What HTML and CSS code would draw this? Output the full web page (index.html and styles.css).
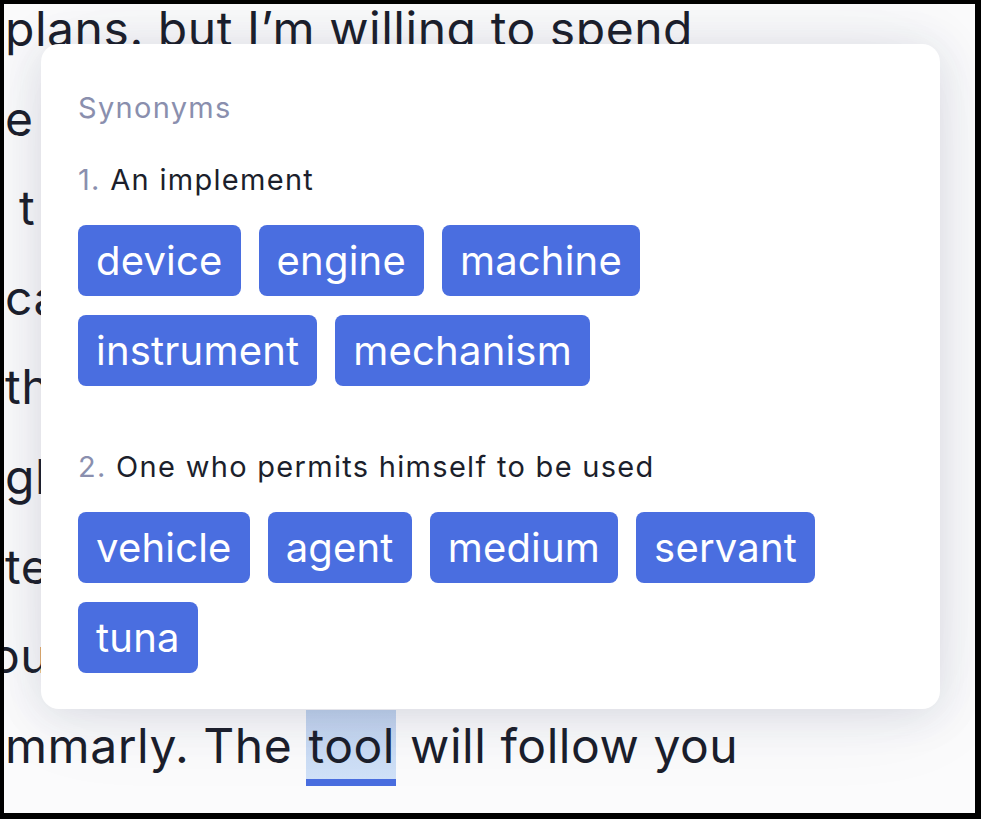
FILE: index.html
```html
<!DOCTYPE html>
<html lang="en">
<head>
<meta charset="utf-8">
<title>Synonyms</title>
<link rel="stylesheet" href="styles.css">
</head>
<body>
<div class="frame">
  <div class="doc">
    <div class="line">plans. but I’m willing to spend</div>
    <div class="line">e more time on a trip with friends</div>
    <div class="line">&nbsp;t a little more for a happy trip</div>
    <div class="line">can write with confidence every day</div>
    <div class="line">the right words in every message</div>
    <div class="line">glad to have a writing assistant</div>
    <div class="line">text that reads clearly and well</div>
    <div class="line shift">ou can trust, thanks to</div>
    <div class="line">mmarly. The <span class="hl">tool</span> will follow you</div>
  </div>

  <div class="card">
    <div class="title">Synonyms</div>

    <div class="sense">
      <div class="sense-head"><span class="num">1.</span> An implement</div>
      <div class="chips">
        <span class="chip">device</span>
        <span class="chip">engine</span>
        <span class="chip">machine</span>
        <span class="chip">instrument</span>
        <span class="chip">mechanism</span>
      </div>
    </div>

    <div class="sense">
      <div class="sense-head"><span class="num">2.</span> One who permits himself to be used</div>
      <div class="chips">
        <span class="chip">vehicle</span>
        <span class="chip">agent</span>
        <span class="chip">medium</span>
        <span class="chip">servant</span>
        <span class="chip">tuna</span>
      </div>
    </div>
  </div>
</div>
</body>
</html>
```

FILE: styles.css
```css
* { box-sizing: border-box; }

html, body {
  margin: 0;
  padding: 0;
  background: #000;
}

.frame {
  position: relative;
  width: 981px;
  height: 819px;
  border-style: solid;
  border-color: #000;
  border-width: 4px 6px 6px 4px;
  background: #fbfbfc;
  overflow: hidden;
  font-family: "Inter", "Noto Sans", sans-serif;
}

.doc {
  margin-top: -20px;
  padding-left: 1px;
  color: #1c1f2c;
  font-size: 48px;
  line-height: 89.6px;
  letter-spacing: 0.55px;
  white-space: nowrap;
}

.line.shift { text-indent: -14px; }

.hl {
  background: linear-gradient(#c2d4ef, #d0e1f8);
  padding: 6px 1px 4px 2px;
  box-shadow: 0 7px 0 #4a6ee0;
}

.card {
  position: absolute;
  left: 37px;
  top: 40px;
  width: 899px;
  height: 665px;
  background: #fff;
  border-radius: 18px;
  box-shadow: 0 6px 44px rgba(40, 50, 90, 0.13), 0 0 100px rgba(40, 50, 90, 0.07);
  padding: 44px 90px 36px 37px;
}

.title {
  font-size: 29px;
  line-height: 40px;
  letter-spacing: 1.3px;
  color: #8a8fae;
}

.sense { margin-top: 32px; }
.sense + .sense { margin-top: 61px; }

.sense-head {
  font-size: 29px;
  line-height: 40px;
  letter-spacing: 1.3px;
  color: #1c1f2c;
}

.num { color: #8a8fae; }

.chips {
  margin-top: 25px;
  display: flex;
  flex-wrap: wrap;
  gap: 19px 18px;
}

.chip {
  display: inline-block;
  height: 71px;
  line-height: 71px;
  padding: 0 18px;
  border-radius: 8px;
  background: #4a6ee0;
  color: #fff;
  font-size: 40px;
  letter-spacing: 0.2px;
}
```
